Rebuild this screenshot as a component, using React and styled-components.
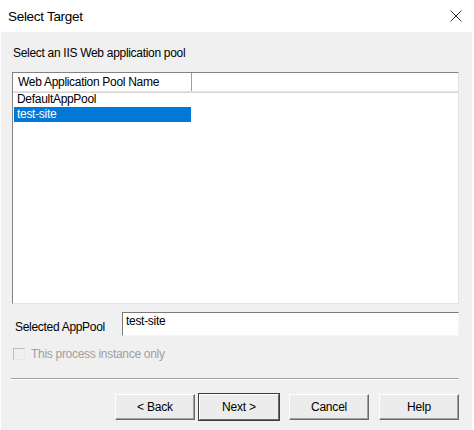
import styled, { createGlobalStyle } from "styled-components";

const Global = createGlobalStyle`
  html, body {
    margin: 0;
    padding: 0;
    background: #ffffff;
  }
  body {
    font-family: "Liberation Sans", Arial, sans-serif;
    color: #000;
  }
`;

const Window = styled.div`
  width: 474px;
  height: 430px;
  display: flex;
  flex-direction: column;
  background: #fff;
  overflow: hidden;
`;

const TitleBar = styled.div`
  height: 32px;
  display: flex;
  align-items: center;
  justify-content: space-between;
  padding: 0 12px 0 8px;
  box-sizing: border-box;
`;

const Title = styled.span`
  font-size: 13.5px;
  letter-spacing: -0.3px;
  color: #000;
`;

const CloseBtn = styled.svg`
  width: 12px;
  height: 12px;
  margin-bottom: 1px;
`;

const Body = styled.div`
  flex: 1;
  background: #f0f0f0;
  margin: 0 2px 0 1px;
  padding: 14px 13px 0 11px;
  display: flex;
  flex-direction: column;
  font-size: 12px;
  letter-spacing: -0.3px;
`;

const Prompt = styled.div`
  height: 14px;
  line-height: 14px;
  padding-left: 1px;
`;

const ListBox = styled.div`
  margin-top: 12px;
  height: 232px;
  background: #fff;
  border: 1px solid #828282;
  border-right-color: #e3e3e3;
  border-bottom-color: #e3e3e3;
  box-sizing: border-box;
  display: flex;
  flex-direction: column;
`;

const Header = styled.div`
  display: flex;
  height: 18px;
  border-bottom: 1px solid #e5e5e5;
  box-shadow: 0 1px 0 #d6d6d6;
`;

const HeaderCell = styled.div`
  width: ${(p) => p.$width || "auto"};
  flex: ${(p) => (p.$width ? "none" : "1")};
  border-right: ${(p) => (p.$width ? "1px solid #a0a0a0" : "none")};
  padding-left: 5px;
  line-height: 18px;
  box-sizing: border-box;
  white-space: nowrap;
`;

const Row = styled.div`
  width: 177px;
  height: 15px;
  line-height: 15px;
  margin-left: 1px;
  padding-left: 3px;
  box-sizing: border-box;
  background: ${(p) => (p.$selected ? "#0078d7" : "transparent")};
  color: ${(p) => (p.$selected ? "#fff" : "#000")};
`;

const Rows = styled.div`
  padding-top: 0;
`;

const FieldRow = styled.div`
  margin-top: 8px;
  display: flex;
  align-items: center;
`;

const FieldLabel = styled.label`
  width: 110px;
  padding-left: 3px;
  padding-top: 5px;
  box-sizing: border-box;
`;

const TextBox = styled.div`
  flex: 1;
  height: 24px;
  background: #fff;
  border: 1px solid #7a7a7a;
  border-right-color: #f5f5f5;
  border-bottom-color: #f5f5f5;
  box-sizing: border-box;
  padding: 1px 3px;
  line-height: 14px;
`;

const CheckRow = styled.div`
  margin-top: 11px;
  display: flex;
  align-items: center;
  gap: 6px;
  color: #a0a0a0;
  padding-left: 1px;
`;

const CheckBox = styled.span`
  width: 12px;
  height: 12px;
  border: 1px solid #bcbcbc;
  border-right-color: #e8e8e8;
  border-bottom-color: #e8e8e8;
  background: #f0f0f0;
  box-sizing: border-box;
`;

const Separator = styled.div`
  margin: 17px 0 0 -1px;
  height: 0;
  border-top: 1px solid #a0a0a0;
  border-bottom: 1px solid #fff;
`;

const ButtonBar = styled.div`
  margin-top: 14px;
  display: flex;
  justify-content: flex-end;
  gap: 10px;
`;

const Button = styled.button`
  width: 80px;
  height: 26px;
  font-family: "Liberation Sans", Arial, sans-serif;
  font-size: 12px;
  letter-spacing: -0.2px;
  color: #000;
  background: #ececec;
  border: 1px solid #fff;
  border-right-color: #6a6a6a;
  border-bottom-color: #6a6a6a;
  box-shadow: ${(p) =>
    p.$default ? "0 0 0 1px #3c3c3c" : "inset -1px -1px 0 #a0a0a0"};
  padding: 0;
`;

const BackNext = styled.div`
  display: flex;
  gap: 4px;
`;

export default function App() {
  return (
    <>
      <Global />
      <Window>
        <TitleBar>
          <Title>Select Target</Title>
          <CloseBtn viewBox="0 0 12 12">
            <path d="M0.5 0.5 L11.5 11.5 M11.5 0.5 L0.5 11.5" stroke="#333" strokeWidth="1" fill="none" />
          </CloseBtn>
        </TitleBar>
        <Body>
          <Prompt>Select an IIS Web application pool</Prompt>
          <ListBox>
            <Header>
              <HeaderCell $width="179px">Web Application Pool Name</HeaderCell>
              <HeaderCell />
            </Header>
            <Rows>
              <Row>DefaultAppPool</Row>
              <Row $selected>test-site</Row>
            </Rows>
          </ListBox>
          <FieldRow>
            <FieldLabel>Selected AppPool</FieldLabel>
            <TextBox>test-site</TextBox>
          </FieldRow>
          <CheckRow>
            <CheckBox />
            <span>This process instance only</span>
          </CheckRow>
          <Separator />
          <ButtonBar>
            <BackNext>
              <Button>&lt; Back</Button>
              <Button $default>Next &gt;</Button>
            </BackNext>
            <Button>Cancel</Button>
            <Button>Help</Button>
          </ButtonBar>
        </Body>
      </Window>
    </>
  );
}
